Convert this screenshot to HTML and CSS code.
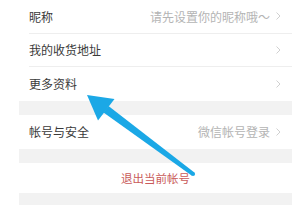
FILE: index.html
```html
<!DOCTYPE html>
<html lang="zh">
<head>
<meta charset="utf-8">
<link rel="stylesheet" href="styles.css">
</head>
<body>
<div class="page">
  <div class="group">
    <div class="row"><div class="inner line"><span class="label">昵称</span><span class="value">请先设置你的昵称哦～</span><svg class="chev" viewBox="0 0 5 8"><polyline points="0.5,0.5 4,4 0.5,7.5"/></svg></div></div>
    <div class="row"><div class="inner line"><span class="label">我的收货地址</span><span class="value"></span><svg class="chev" viewBox="0 0 5 8"><polyline points="0.5,0.5 4,4 0.5,7.5"/></svg></div></div>
    <div class="row"><div class="inner"><span class="label">更多资料</span><span class="value"></span><svg class="chev" viewBox="0 0 5 8"><polyline points="0.5,0.5 4,4 0.5,7.5"/></svg></div></div>
  </div>
  <div class="gap"></div>
  <div class="group">
    <div class="row tall"><div class="inner"><span class="label">帐号与安全</span><span class="value">微信帐号登录</span><svg class="chev" viewBox="0 0 5 8"><polyline points="0.5,0.5 4,4 0.5,7.5"/></svg></div></div>
  </div>
  <div class="gap"></div>
  <div class="group">
    <div class="logout">退出当前帐号</div>
  </div>
  <div class="tail"></div>
</div>
<svg class="arrow" viewBox="0 0 300 205" width="300" height="205">
  <polygon points="87,95 114.5,99 98,120.5" fill="#1ba8e6"/>
  <polygon points="108.5,106 103.5,112.5 191.6,175.6 194.4,172.4" fill="#1ba8e6"/>
  <circle cx="193" cy="174" r="2.1" fill="#1ba8e6"/>
</svg>
</body>
</html>
```

FILE: styles.css
```css
html, body {
  margin: 0;
  padding: 0;
  background: #ffffff;
}
body {
  width: 300px;
  height: 205px;
  overflow: hidden;
  position: relative;
  font-family: "Noto Sans CJK SC", "Noto Sans", sans-serif;
  font-size: 12px;
}
.page {
  margin-left: 19px;
  width: 273px;
  height: 205px;
  background: #f2f2f2;
  display: flex;
  flex-direction: column;
}
.group {
  background: #ffffff;
  display: flex;
  flex-direction: column;
}
.row {
  padding-left: 10px;
  height: 33.5px;
}
.row.tall {
  height: 34px;
}
.inner {
  height: 100%;
  box-sizing: border-box;
  display: flex;
  align-items: center;
  padding-right: 11px;
}
.inner.line {
  border-bottom: 1px solid #eeeeee;
}
.label {
  color: #3a3a3a;
  flex: 1;
}
.value {
  color: #b4b4b4;
  margin-right: 6px;
}
.chev {
  width: 5px;
  height: 8px;
}
.chev polyline {
  fill: none;
  stroke: #c4c4c4;
  stroke-width: 0.8;
}
.gap {
  height: 14px;
}
.logout {
  height: 30px;
  display: flex;
  align-items: center;
  justify-content: center;
  color: #c95a5a;
  font-size: 11.5px;
}
.tail {
  flex: 1;
}
.arrow {
  position: absolute;
  left: 0;
  top: 0;
}
```
